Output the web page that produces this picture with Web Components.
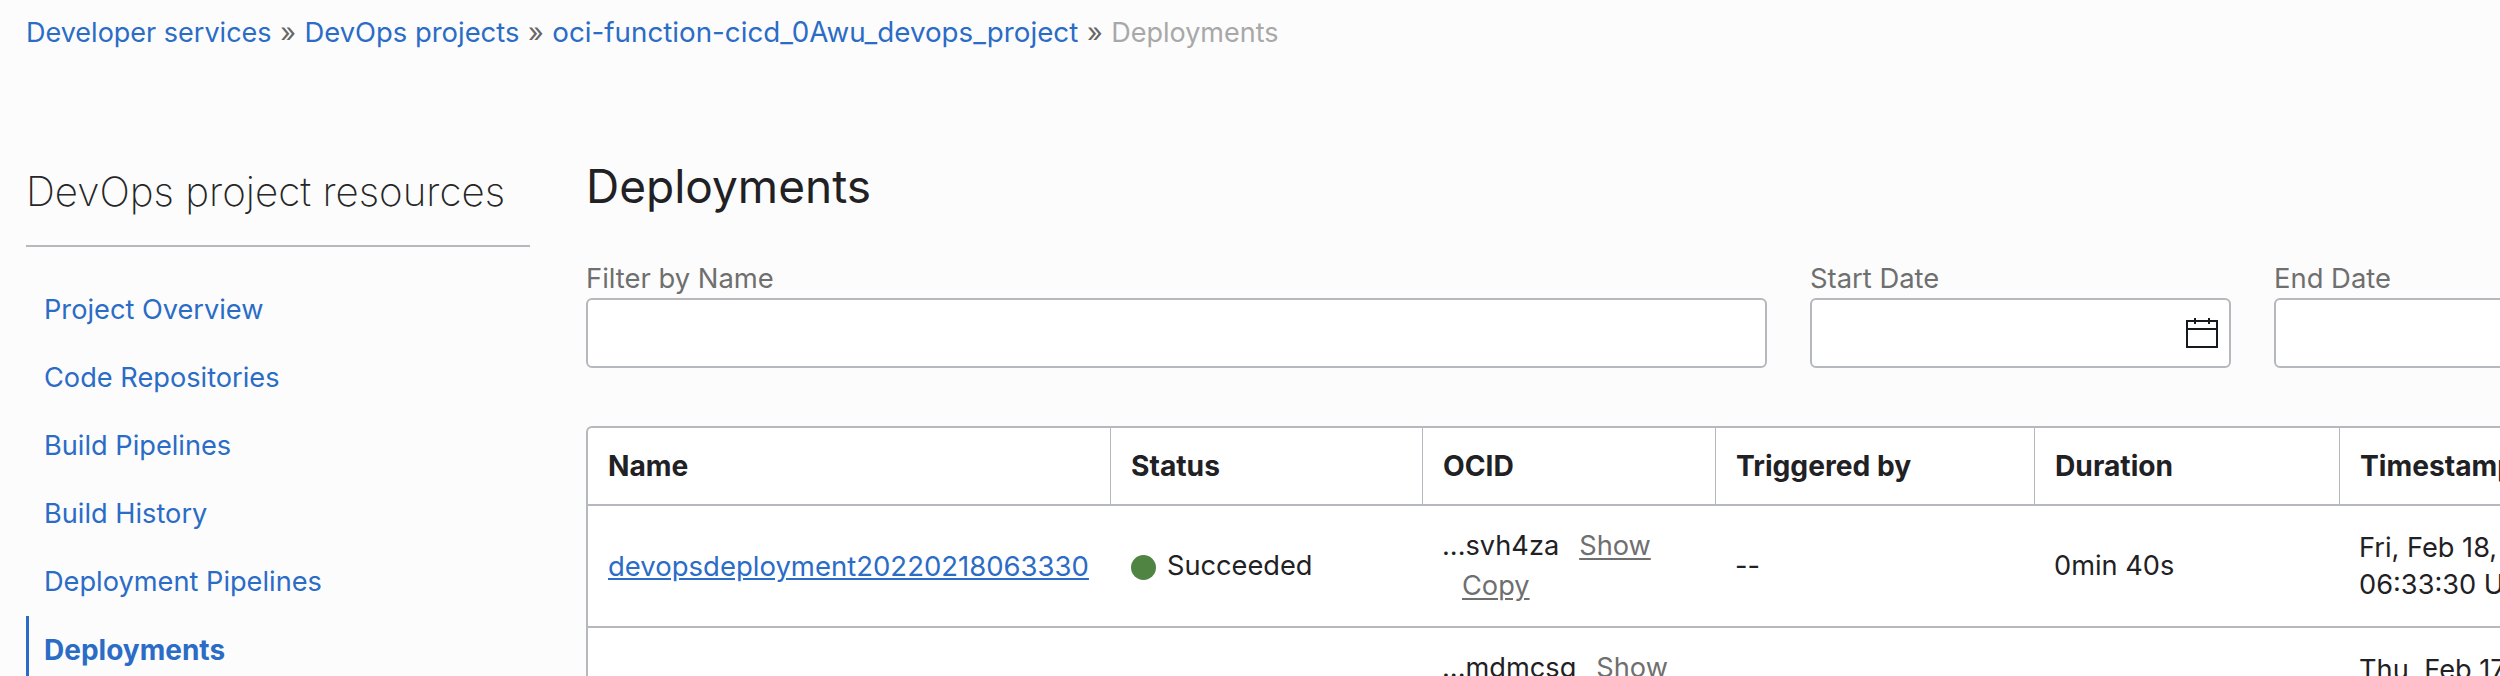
<!DOCTYPE html>
<html><head><meta charset="utf-8"><style>
html,body{margin:0;height:676px;overflow:hidden;background:#fcfcfc}
body{font:27.2px/36px Inter,"Liberation Sans",sans-serif;color:#1f2124}
</style></head><body>
<app-page>
<bread-crumbs slot="crumbs"></bread-crumbs>
<side-nav slot="side"></side-nav>
<deploy-main slot="main"></deploy-main>
</app-page>
<script>
const def=(name,html)=>customElements.define(name,class extends HTMLElement{constructor(){super();this.attachShadow({mode:'open'}).innerHTML=html;}});
def('app-page',`<style>:host{display:block;width:2500px;height:676px;overflow:hidden}
.top{padding:14px 26px 0;height:136px;box-sizing:border-box}
.cols{display:flex;gap:56px;align-items:flex-start}
.s{flex:0 0 504px;margin-left:26px}.m{flex:0 0 auto}</style>
<div class="top"><slot name="crumbs"></slot></div>
<div class="cols"><div class="s"><slot name="side"></slot></div><div class="m"><slot name="main"></slot></div></div>`);
def('bread-crumbs',`<style>:host{display:block;font-size:27px;line-height:36px;color:#666;white-space:nowrap}
a{color:#2a6cc6;text-decoration:none}span{color:#a8a8a8}b{font-weight:400;margin:0 1px}
.d{font-size:27.4px}.o{font-size:27.75px}</style>
<a>Developer services</a> <b>»</b> <a class="d">DevOps projects</a> <b>»</b> <a class="o">oci-function-cicd_0Awu_devops_project</a> <b>»</b> <span>Deployments</span>`);
def('side-nav',`<style>:host{display:block}
h2{margin:0;padding:28px 0 25px;font-size:40.3px;line-height:56px;font-weight:200;color:#262626;border-bottom:2px solid #b5b8bc;white-space:nowrap}
nav{display:flex;flex-direction:column;padding-top:29px}
a{display:block;height:68px;line-height:68px;padding-left:18px;color:#2a6cc6;font-size:27.2px}
a.on{font-weight:700;font-size:28px;border-left:3px solid #2a6cc6;padding-left:15px}</style>
<h2>DevOps project resources</h2>
<nav><a>Project Overview</a><a>Code Repositories</a><a>Build Pipelines</a><a>Build History</a><a>Deployment Pipelines</a><a class="on">Deployments</a></nav>`);
def('filter-field',`<style>:host{display:block;flex:0 0 auto;width:var(--w)}
label{display:block;height:36px;line-height:36px;font-size:27.4px;color:#6f6f6f;margin-bottom:2px}
.b{height:70px;box-sizing:border-box;border:2px solid #b5b8bc;border-radius:6px;background:#fff;display:flex;align-items:center;justify-content:flex-end;padding-right:11px}</style>
<label><slot name="l"></slot></label><div class="b"><slot></slot></div>`);
def('cal-icon',`<style>:host{display:block;width:32px;height:30px}svg{display:block}</style>
<svg width="32" height="30" viewBox="0 0 32 30" fill="none" stroke="#161a1f" stroke-width="2"><rect x="1" y="3" width="30" height="26"/><path d="M0 11H32M9 0V6M23 0V6"/></svg>`);
def('deploy-table',`<style>:host{display:block;width:1920px}
.g{display:grid;grid-template-columns:522px 312px 293px 319px 305px 364px;background:#fff;border:2px solid #b5b8bc;border-right:0;border-bottom:0;border-radius:6px 0 0 0}
.h{font-weight:700;font-size:28.2px;height:76px;display:flex;align-items:center;padding:0 20px;border-bottom:2px solid #b5b8bc;border-left:1px solid #b5b8bc;white-space:nowrap}
.h:first-child{border-left:0}
.c{display:flex;align-items:center;padding:0 20px;border-bottom:2px solid #b5b8bc;height:120px;line-height:40px;white-space:nowrap}
.g>*{min-width:0;overflow:hidden;box-sizing:content-box}
.t{line-height:37px}
a.n{color:#2a6cc6;text-decoration:underline;font-size:27.5px}
.dot{display:inline-block;width:25px;height:25px;border-radius:50%;background:#4f8443;margin:0 11px 0 1px;vertical-align:-5px}
u{color:#6f6f6f;text-underline-offset:3px;margin-left:20px}</style>
<div class="g">
<div class="h">Name</div><div class="h">Status</div><div class="h">OCID</div><div class="h">Triggered by</div><div class="h">Duration</div><div class="h">Timestamp</div>
<div class="c"><div><a class="n">devopsdeployment20220218063330</a></div></div>
<div class="c"><div><i class="dot"></i>Succeeded</div></div>
<div class="c"><div>...svh4za<u>Show</u><br><u>Copy</u></div></div>
<div class="c"><div>--</div></div>
<div class="c"><div>0min 40s</div></div>
<div class="c"><div class="t">Fri, Feb 18, 2022<br>06:33:30 UTC</div></div>
<div class="c"></div>
<div class="c"></div>
<div class="c"><div>...mdmcsg<u>Show</u><br><u>Copy</u></div></div>
<div class="c"></div>
<div class="c"></div>
<div class="c"><div class="t">Thu, Feb 17, 2022<br>08:15:42 UTC</div></div>
</div>`);
def('deploy-main',`<style>:host{display:block}
h1{margin:0;font-size:46px;line-height:60px;font-weight:400;color:#1f2124;padding-top:20px}
.f{display:flex;gap:43px;margin-top:44px;margin-bottom:58px}</style>
<h1>Deployments</h1>
<div class="f">
<filter-field style="--w:1181px"><span slot="l">Filter by Name</span></filter-field>
<filter-field style="--w:421px"><span slot="l">Start Date</span><cal-icon></cal-icon></filter-field>
<filter-field style="--w:421px"><span slot="l">End Date</span><cal-icon></cal-icon></filter-field>
</div>
<deploy-table></deploy-table>`);
</script>
</body></html>
